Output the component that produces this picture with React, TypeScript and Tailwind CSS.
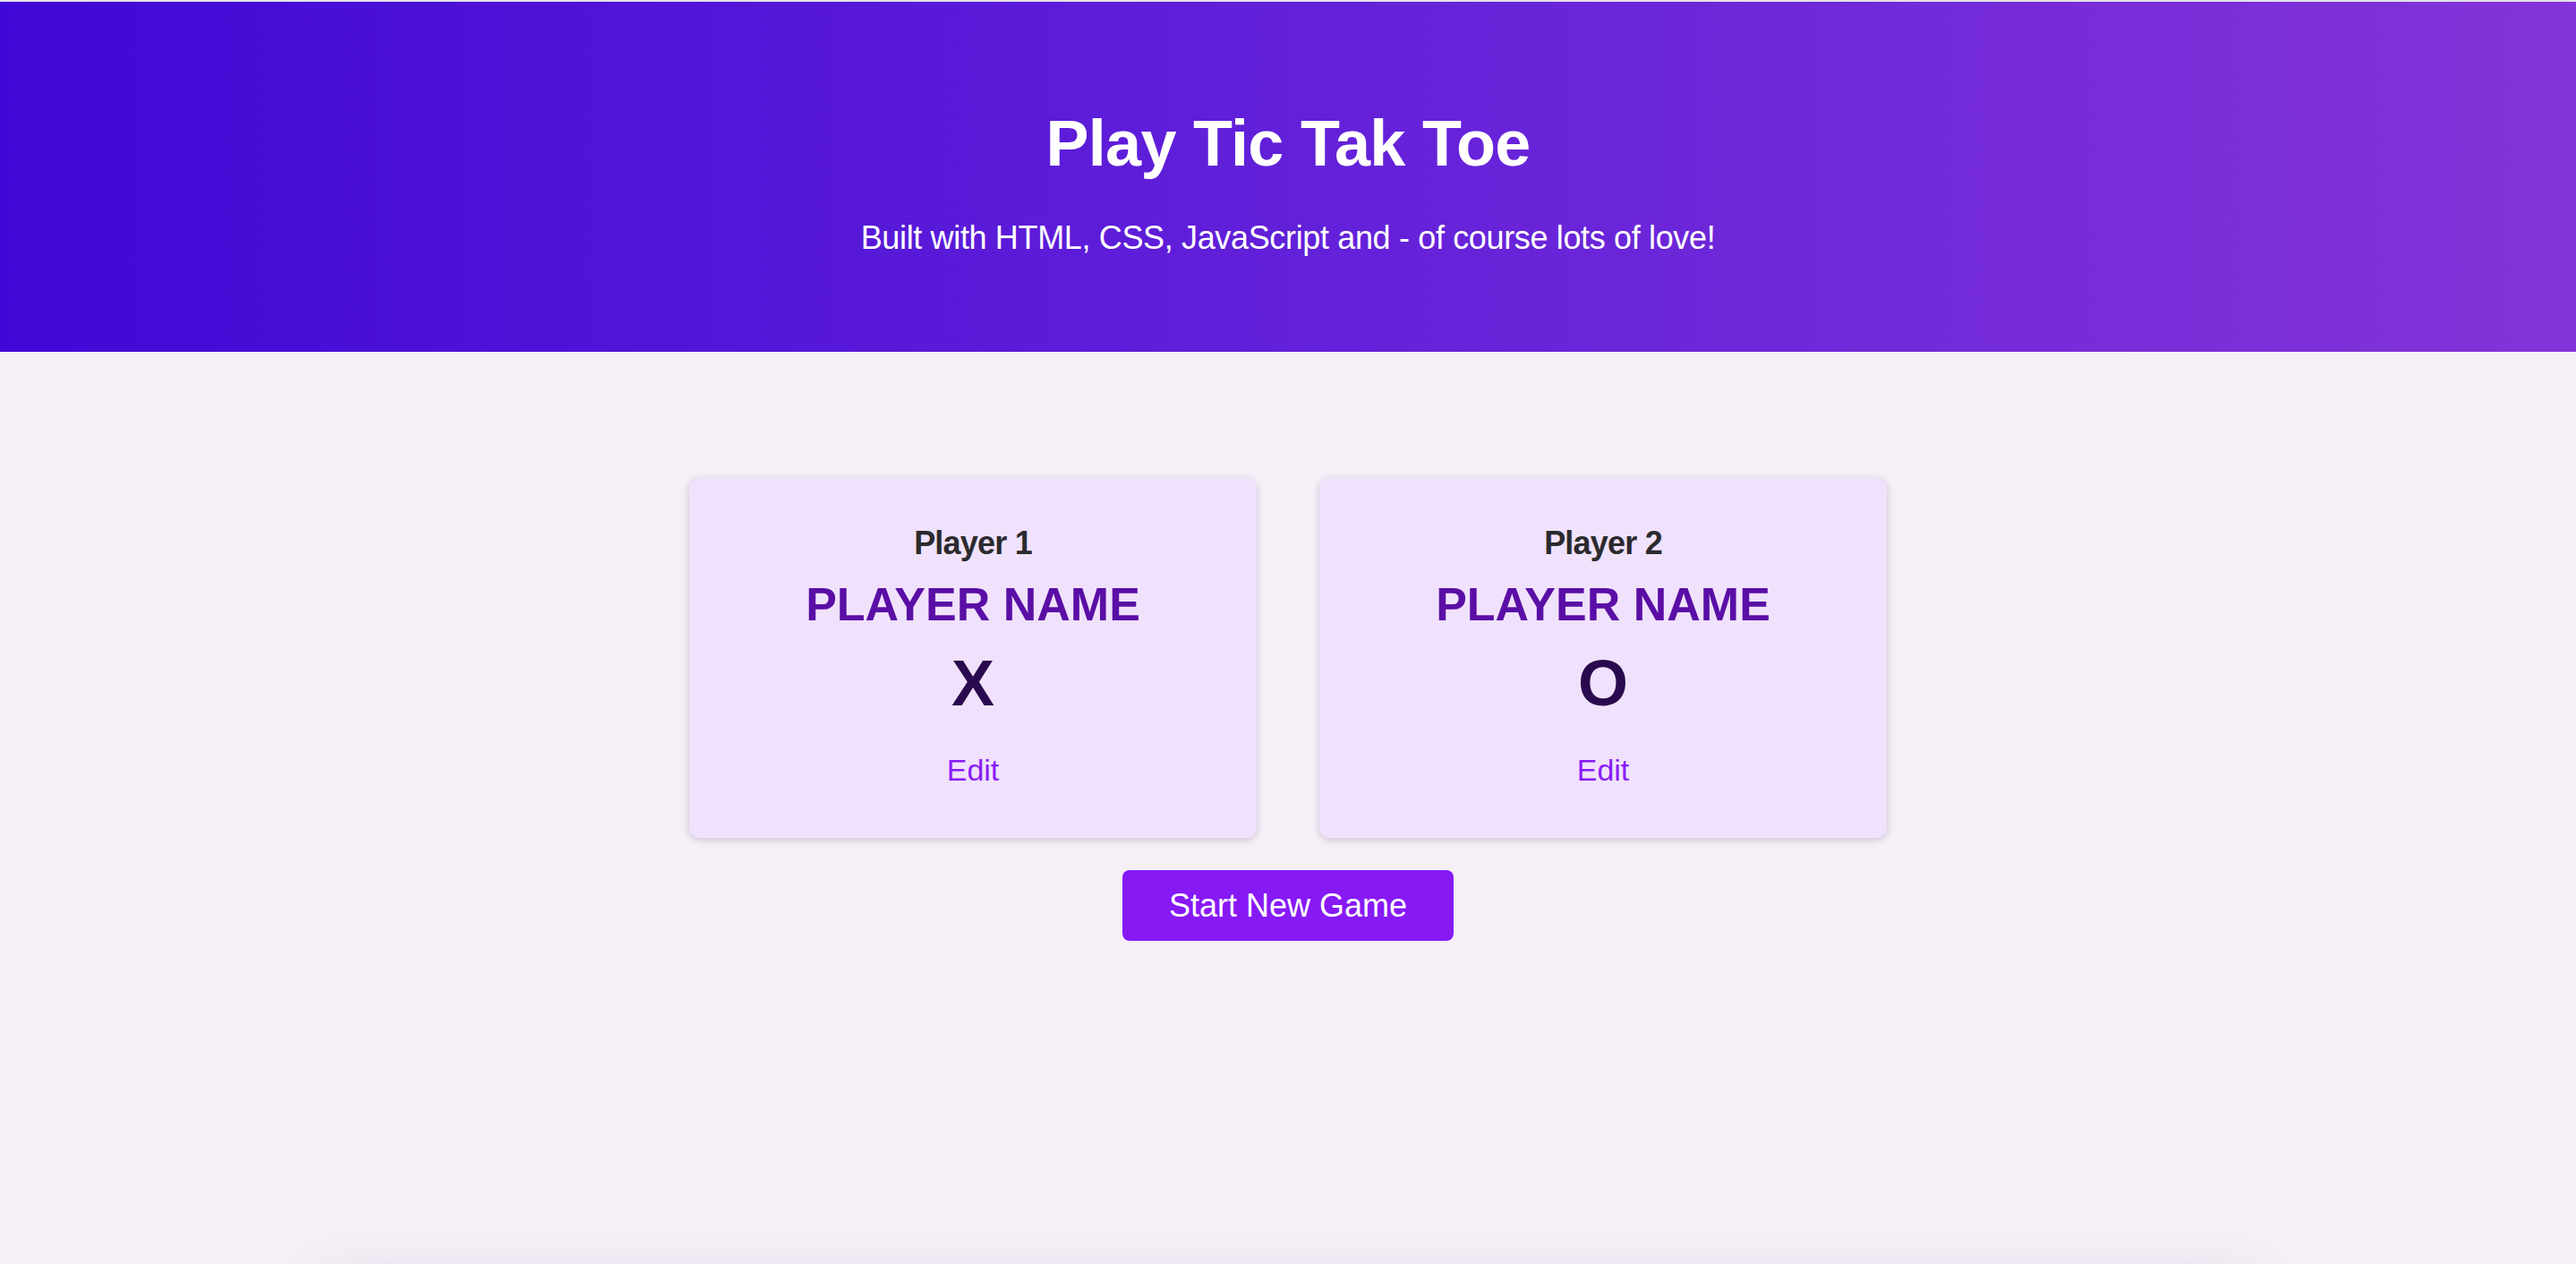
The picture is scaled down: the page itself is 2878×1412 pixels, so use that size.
import React from 'react';

type Player = { label: string; name: string; symbol: string };

const PLAYERS: Player[] = [
    { label: 'Player 1', name: 'PLAYER NAME', symbol: 'X' },
    { label: 'Player 2', name: 'PLAYER NAME', symbol: 'O' },
];

const PlayerCard: React.FC<{ player: Player }> = ({ player }) => (
    <li className="w-[634px] rounded-[12px] bg-[#f0e2fc] pt-[55px] pb-[59px] flex flex-col items-center shadow-[0_2px_8px_rgba(60,30,80,0.22)]">
        <h2 className="text-[36px] leading-[36px] font-bold tracking-[-0.8px] text-[#2b2a2e]">{player.label}</h2>
        <h3 className="mt-[24px] text-[52px] leading-[52px] font-bold text-[#5a0ea6]">{player.name}</h3>
        <p className="mt-[26px] text-[72px] leading-[72px] font-bold text-[#2a0a4e]">{player.symbol}</p>
        <button className="mt-[44px] text-[34px] leading-[34px] text-[#8a1cf7] bg-transparent">Edit</button>
    </li>
);

export default function App() {
    return (
        <div className="min-h-screen bg-[#f5eff7] font-['Liberation_Sans',Arial,sans-serif]">
            <div className="h-[2px] bg-[#e4e2e6]" />
            <header className="h-[391px] pt-[122px] flex flex-col items-center text-white bg-[linear-gradient(to_right,#4008d6,#6220d9_50%,#8434d8)]">
                <h1 className="text-[72px] leading-[72px] font-bold tracking-[-0.7px]">Play Tic Tak Toe</h1>
                <p className="mt-[52px] text-[36px] leading-[36px] tracking-[-0.35px]">Built with HTML, CSS, JavaScript and - of course lots of love!</p>
            </header>

            <main className="flex flex-col items-center pt-[141px]">
                <ol className="flex gap-[70px]">
                    {PLAYERS.map(p => (
                        <PlayerCard key={p.label} player={p} />
                    ))}
                </ol>
                <button className="mt-[36px] w-[370px] h-[79px] rounded-[8px] bg-[#8719f5] text-white text-[36px] leading-[36px] flex items-center justify-center">
                    Start New Game
                </button>

                {/* game board sits below the fold, only its shadow shows */}
                <section className="mt-[399px] w-[2160px] h-[600px] rounded-[12px] bg-[#f5eff7] shadow-[0_0_80px_rgba(60,20,80,0.2)]" />
            </main>
        </div>
    );
}
